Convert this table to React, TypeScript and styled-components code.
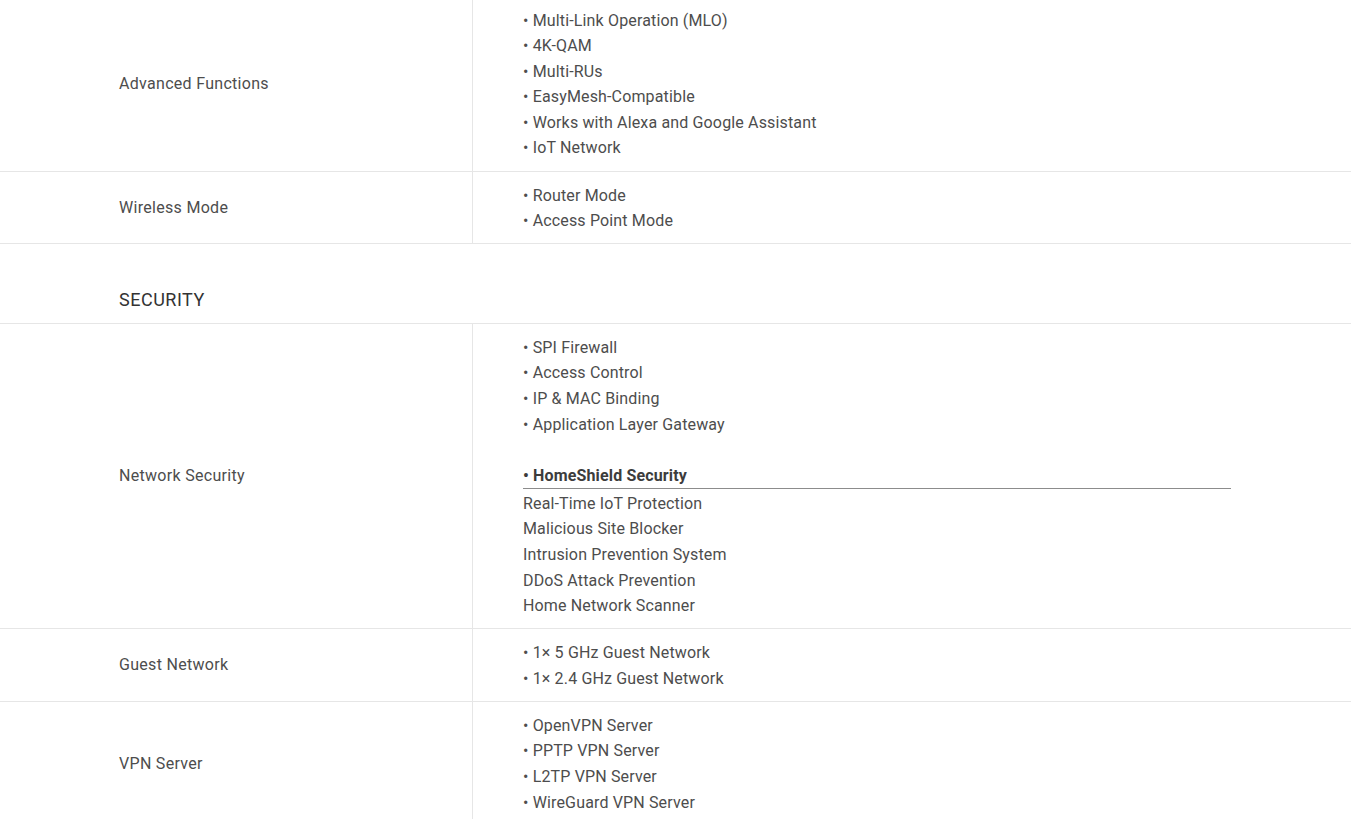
import React from "react";
import styled, { createGlobalStyle } from "styled-components";

const GlobalStyle = createGlobalStyle`
  html, body {
    margin: 0;
    padding: 0;
    background: #ffffff;
  }
  body {
    font-family: Roboto, "Liberation Sans", Arial, sans-serif;
    color: #4a4a4a;
    overflow: hidden;
  }
`;

const SpecWrapper = styled.div`
  width: 1351px;
  margin-top: -3.5px;
`;

const SpecRow = styled.div`
  display: flex;
  border-bottom: 1px solid #e6e6e6;
`;

const Label = styled.div`
  width: 473px;
  flex-shrink: 0;
  box-sizing: border-box;
  padding-left: 119px;
  display: flex;
  align-items: center;
  font-size: 16px;
  line-height: 25.6px;
  letter-spacing: 0.3px;
  color: #4d4d4d;
  border-right: 1px solid #e6e6e6;
`;

const Value = styled.div`
  flex: 1;
  box-sizing: border-box;
  padding: 11px 120px 9.5px 50px;
  font-size: 16px;
  line-height: 25.6px;
  letter-spacing: 0.15px;
  color: #4d4d4d;
`;

const Item = styled.div``;

const Spacer = styled.div`
  height: 25.6px;
`;

const SubTitle = styled.div`
  font-weight: bold;
  color: #3c3c3c;
  border-bottom: 1px solid #8c8c8c;
  line-height: 25px;
  margin-bottom: 2px;
`;

const SectionTitle = styled.div`
  padding: 43.5px 0 11px 119px;
  font-size: 18px;
  line-height: 24px;
  letter-spacing: 0.5px;
  color: #333333;
  border-bottom: 1px solid #e6e6e6;
`;

type Row = { label: string; items: string[] };

const Bullets: React.FC<{ items: string[] }> = ({ items }) => (
  <>
    {items.map((i) => (
      <Item key={i}>• {i}</Item>
    ))}
  </>
);

const topRows: Row[] = [
  {
    label: "Advanced Functions",
    items: [
      "Multi-Link Operation (MLO)",
      "4K-QAM",
      "Multi-RUs",
      "EasyMesh-Compatible",
      "Works with Alexa and Google Assistant",
      "IoT Network",
    ],
  },
  { label: "Wireless Mode", items: ["Router Mode", "Access Point Mode"] },
];

const bottomRows: Row[] = [
  {
    label: "Guest Network",
    items: ["1× 5 GHz Guest Network", "1× 2.4 GHz Guest Network"],
  },
  {
    label: "VPN Server",
    items: [
      "OpenVPN Server",
      "PPTP VPN Server",
      "L2TP VPN Server",
      "WireGuard VPN Server",
    ],
  },
];

const App: React.FC = () => (
  <>
    <GlobalStyle />
    <SpecWrapper>
      {topRows.map((r) => (
        <SpecRow key={r.label}>
          <Label>{r.label}</Label>
          <Value>
            <Bullets items={r.items} />
          </Value>
        </SpecRow>
      ))}
      <SectionTitle>SECURITY</SectionTitle>
      <SpecRow>
        <Label>Network Security</Label>
        <Value>
          <Bullets
            items={[
              "SPI Firewall",
              "Access Control",
              "IP & MAC Binding",
              "Application Layer Gateway",
            ]}
          />
          <Spacer />
          <SubTitle>• HomeShield Security</SubTitle>
          <Item>Real-Time IoT Protection</Item>
          <Item>Malicious Site Blocker</Item>
          <Item>Intrusion Prevention System</Item>
          <Item>DDoS Attack Prevention</Item>
          <Item>Home Network Scanner</Item>
        </Value>
      </SpecRow>
      {bottomRows.map((r) => (
        <SpecRow key={r.label}>
          <Label>{r.label}</Label>
          <Value>
            <Bullets items={r.items} />
          </Value>
        </SpecRow>
      ))}
    </SpecWrapper>
  </>
);

export default App;
